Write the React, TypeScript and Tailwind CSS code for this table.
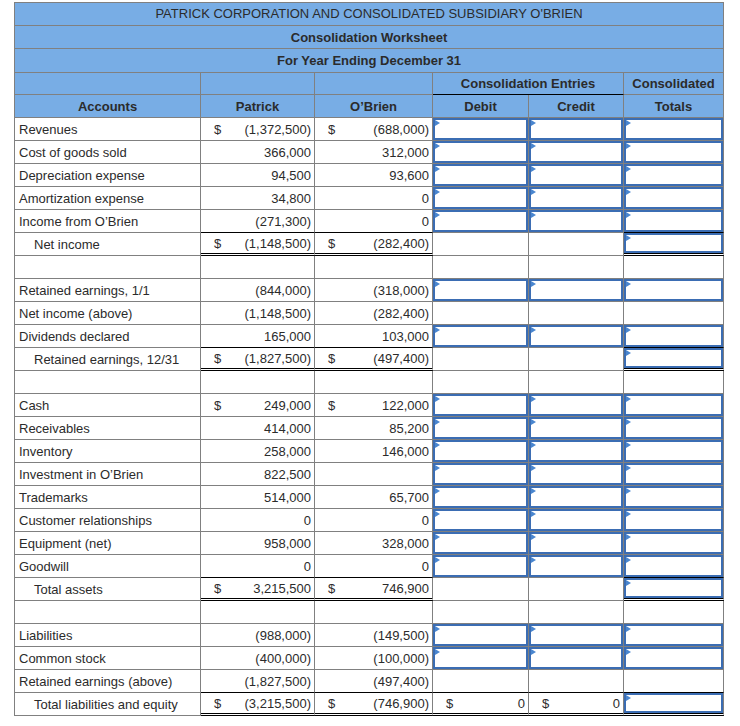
import { FC } from 'react';

type Row = {
  label?: string;
  p?: string;
  o?: string;
  dollar?: boolean;
  indent?: boolean;
  total?: boolean;
  dc?: boolean; // debit + credit inputs
  t?: boolean; // totals input
  zeros?: boolean; // "$ 0" in debit/credit
};

const rows: Row[] = [
  { label: 'Revenues', p: '(1,372,500)', o: '(688,000)', dollar: true, dc: true, t: true },
  { label: 'Cost of goods sold', p: '366,000', o: '312,000', dc: true, t: true },
  { label: 'Depreciation expense', p: '94,500', o: '93,600', dc: true, t: true },
  { label: 'Amortization expense', p: '34,800', o: '0', dc: true, t: true },
  { label: 'Income from O’Brien', p: '(271,300)', o: '0', dc: true, t: true },
  { label: 'Net income', p: '(1,148,500)', o: '(282,400)', dollar: true, indent: true, total: true, t: true },
  {},
  { label: 'Retained earnings, 1/1', p: '(844,000)', o: '(318,000)', dc: true, t: true },
  { label: 'Net income (above)', p: '(1,148,500)', o: '(282,400)' },
  { label: 'Dividends declared', p: '165,000', o: '103,000', dc: true, t: true },
  { label: 'Retained earnings, 12/31', p: '(1,827,500)', o: '(497,400)', dollar: true, indent: true, total: true, t: true },
  {},
  { label: 'Cash', p: '249,000', o: '122,000', dollar: true, dc: true, t: true },
  { label: 'Receivables', p: '414,000', o: '85,200', dc: true, t: true },
  { label: 'Inventory', p: '258,000', o: '146,000', dc: true, t: true },
  { label: 'Investment in O’Brien', p: '822,500', o: '', dc: true, t: true },
  { label: 'Trademarks', p: '514,000', o: '65,700', dc: true, t: true },
  { label: 'Customer relationships', p: '0', o: '0', dc: true, t: true },
  { label: 'Equipment (net)', p: '958,000', o: '328,000', dc: true, t: true },
  { label: 'Goodwill', p: '0', o: '0', dc: true, t: true },
  { label: 'Total assets', p: '3,215,500', o: '746,900', dollar: true, indent: true, total: true, t: true },
  {},
  { label: 'Liabilities', p: '(988,000)', o: '(149,500)', dc: true, t: true },
  { label: 'Common stock', p: '(400,000)', o: '(100,000)', dc: true, t: true },
  { label: 'Retained earnings (above)', p: '(1,827,500)', o: '(497,400)' },
  { label: 'Total liabilities and equity', p: '(3,215,500)', o: '(746,900)', dollar: true, indent: true, total: true, zeros: true, t: true },
];

// columns 1=Patrick 2=O'Brien 3=Debit 4=Credit 5=Totals that get the black rules on total rows
const ruled = (r: Row | undefined, col: number) => {
  if (!r || !r.total) return false;
  if (col === 1 || col === 2 || col === 5) return true;
  return !!r.zeros && (col === 3 || col === 4);
};

const InputBox: FC<{ short?: boolean }> = ({ short }) => (
  <div className={`relative w-full ${short ? 'h-[20px]' : 'h-[22px]'}`}>
    <input className="block h-full w-full border-2 border-[#3b6db3] bg-white outline-none" />
    <span className="absolute left-[2px] top-[2px] h-0 w-0 border-y-[3px] border-l-[5px] border-y-transparent border-l-[#4a86cf]" />
  </div>
);

const Money: FC<{ dollar?: boolean; value?: string }> = ({ dollar, value }) => (
  <div className="flex items-center justify-between pl-[13px] pr-[3px]">
    <span>{dollar ? '$' : ''}</span>
    <span>{value}</span>
  </div>
);

const App: FC = () => {
  const cell = 'h-[23px] border-r border-b border-[#808080] p-0';
  const text = 'pt-[2px]';

  const bottom = (i: number, col: number) => {
    if (ruled(rows[i], col)) return 'border-b-[3px] border-b-black [border-bottom-style:double]';
    if (ruled(rows[i + 1], col)) return 'border-b-black';
    return '';
  };

  const head = 'border-r border-b border-[#808080] bg-[#78ade5] p-0 text-center font-bold';

  return (
    <div className="min-h-screen bg-white pl-[14px] pt-[2px] font-['Liberation_Sans',Arial,sans-serif] text-[13px] leading-[18px] text-[#2b2b2b]">
      <table className="w-[710px] table-fixed border-separate border-spacing-0">
        <colgroup>
          <col className="w-[187px]" />
          <col className="w-[114px]" />
          <col className="w-[118px]" />
          <col className="w-[96px]" />
          <col className="w-[95px]" />
          <col className="w-[100px]" />
        </colgroup>
        <thead>
          <tr>
            <th colSpan={6} className={`${head} h-[24px] border-t border-l !font-normal`}>
              PATRICK CORPORATION AND CONSOLIDATED SUBSIDIARY O'BRIEN
            </th>
          </tr>
          <tr>
            <th colSpan={6} className={`${head} h-[23px] border-l pt-[2px]`}>
              Consolidation Worksheet
            </th>
          </tr>
          <tr>
            <th colSpan={6} className={`${head} h-[24px] border-l`}>
              For Year Ending December 31
            </th>
          </tr>
          <tr>
            <th className={`${head} h-[22px] border-l`}></th>
            <th className={`${head} h-[22px]`}></th>
            <th className={`${head} h-[22px]`}></th>
            <th colSpan={2} className={`${head} h-[22px] border-b-black`}>
              Consolidation Entries
            </th>
            <th className={`${head} h-[22px]`}>Consolidated</th>
          </tr>
          <tr>
            <th className={`${head} h-[23px] border-l pt-[2px]`}>Accounts</th>
            <th className={`${head} h-[23px] pt-[2px]`}>Patrick</th>
            <th className={`${head} h-[23px] pt-[2px]`}>O’Brien</th>
            <th className={`${head} h-[23px] pt-[2px]`}>Debit</th>
            <th className={`${head} h-[23px] pt-[2px]`}>Credit</th>
            <th className={`${head} h-[23px] pt-[2px]`}>Totals</th>
          </tr>
        </thead>
        <tbody>
          {rows.map((r, i) => (
            <tr key={i}>
              <td className={`${cell} ${text} border-l ${r.indent ? 'pl-[19px]' : 'pl-[4px]'} whitespace-nowrap`}>
                {r.label}
              </td>
              <td className={`${cell} ${text} ${bottom(i, 1)}`}>
                {r.label && <Money dollar={r.dollar} value={r.p} />}
              </td>
              <td className={`${cell} ${text} ${bottom(i, 2)}`}>
                {r.label && <Money dollar={r.dollar} value={r.o} />}
              </td>
              <td className={`${cell} ${r.zeros ? text : ''} ${bottom(i, 3)}`}>
                {r.dc && <InputBox />}
                {r.zeros && <Money dollar value="0" />}
              </td>
              <td className={`${cell} ${r.zeros ? text : ''} ${bottom(i, 4)}`}>
                {r.dc && <InputBox />}
                {r.zeros && <Money dollar value="0" />}
              </td>
              <td className={`${cell} ${bottom(i, 5)}`}>{r.t && <InputBox short={r.total} />}</td>
            </tr>
          ))}
        </tbody>
      </table>
    </div>
  );
};

export default App;
